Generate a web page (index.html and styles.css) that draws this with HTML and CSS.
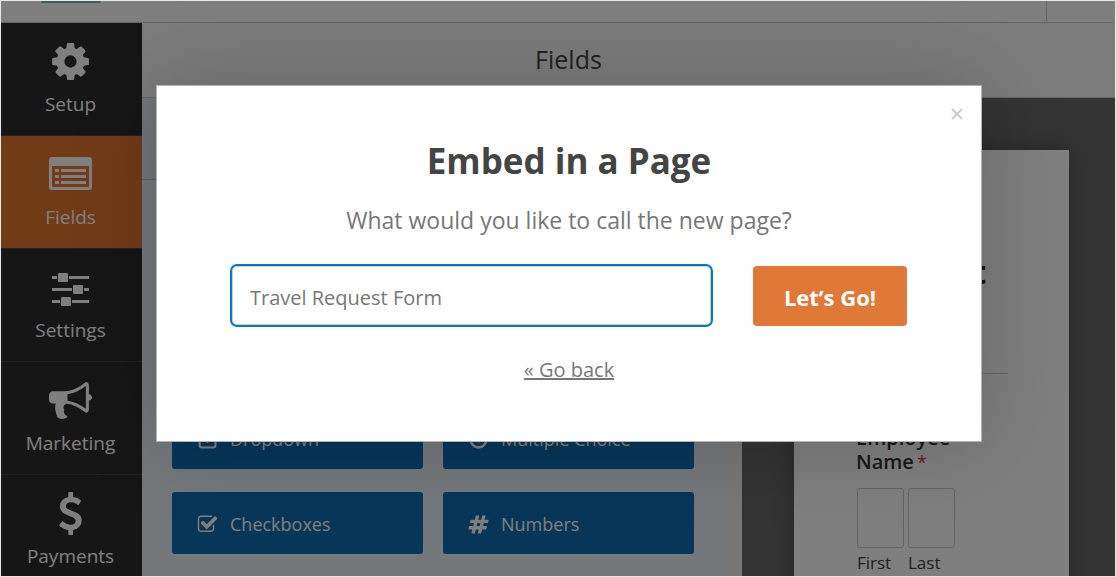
FILE: index.html
```html
<!DOCTYPE html>
<html lang="en">
<head>
<meta charset="utf-8">
<meta name="viewport" content="width=device-width, initial-scale=1">
<title>Form Builder</title>
<link rel="stylesheet" href="styles.css">
</head>
<body>
<div class="app">
  <header class="topbar">
    <span class="logo"></span>
    <span class="divider"></span>
  </header>
  <div class="workspace">
    <nav class="sidebar">
      <button class="nav-item" type="button">
        <svg class="nav-icon" viewBox="0 0 1792 1792"><path d="M1152 896q0-106-75-181t-181-75-181 75-75 181 75 181 181 75 181-75 75-181zm512-109v222q0 12-8 23t-20 13l-185 28q-19 54-39 91 35 50 107 138 10 12 10 25t-9 23q-27 37-99 108t-94 71q-12 0-26-9l-138-108q-44 23-91 38-16 136-29 186-7 28-36 28h-222q-14 0-24.5-8.5t-11.5-21.5l-28-184q-49-16-90-37l-141 107q-10 9-25 9-14 0-25-11-126-114-165-168-7-10-7-23 0-12 8-23 15-21 51-66.5t54-70.5q-27-50-41-99l-183-27q-13-2-21-12.5t-8-23.5v-222q0-12 8-23t19-13l186-28q14-46 39-92-40-57-107-138-10-12-10-24 0-10 9-23 26-36 98.5-107.5t94.5-71.5q13 0 26 10l138 107q44-23 91-38 16-136 29-186 7-28 36-28h222q14 0 24.5 8.5t11.5 21.5l28 184q49 16 90 37l142-107q9-9 24-9 13 0 25 10 129 119 165 170 7 8 7 22 0 12-8 23-15 21-51 66.5t-54 70.5q26 50 41 98l183 28q13 2 21 12.5t8 23.5z"/></svg>
        <span>Setup</span>
      </button>
      <button class="nav-item active" type="button">
        <svg class="nav-icon" viewBox="0 0 43 43"><path fill-rule="evenodd" d="M3 4h37q3 0 3 3v27q0 3-3 3H3q-3 0-3-3V7q0-3 3-3zM3 13v20q0 1 1 1h35q1 0 1-1V13z"/><path d="M6 16h4v3H6zM12 16h25v3H12zM6 22h4v3H6zM12 22h25v3H12zM6 28h4v3H6zM12 28h25v3H12z"/></svg>
        <span>Fields</span>
      </button>
      <button class="nav-item" type="button">
        <svg class="nav-icon" viewBox="0 0 43 43"><path d="M3 10h37v3H3zM3 22h37v3H3zM3 34h37v3H3z"/><rect class="knob-gap" x="8" y="7" width="12" height="9"/><rect class="knob-gap" x="23" y="19" width="12" height="9"/><rect class="knob-gap" x="11" y="31" width="12" height="9"/><rect x="9" y="7" width="10" height="9" rx="1"/><rect x="24" y="19" width="10" height="9" rx="1"/><rect x="12" y="31" width="10" height="9" rx="1"/></svg>
        <span>Settings</span>
      </button>
      <button class="nav-item" type="button">
        <svg class="nav-icon" viewBox="0 0 1792 1792"><path d="M1664 640q53 0 90.5 37.5t37.5 90.5-37.5 90.5-90.5 37.5v384q0 52-38 90t-90 38q-417-347-812-380-58 19-91 66t-31 100.5 40 92.5q-20 33-23 65.5t6 58 33.5 55 48 50 61.5 50.5q-29 58-111.5 83t-168.5 11.5-132-55.5q-7-23-29.5-87.5t-32-94.5-23-89-15-101 3.5-98.5 22-110.5h-122q-66 0-113-47t-47-113v-192q0-66 47-113t113-47h480q435 0 896-384 52 0 90 38t38 90v384zm-128 604v-954q-394 302-768 343v270q377 42 768 341z"/></svg>
        <span>Marketing</span>
      </button>
      <button class="nav-item" type="button">
        <svg class="nav-icon" viewBox="0 0 1792 1792"><path d="M1362 1185q0 153-99.5 263.5t-258.5 136.5v175q0 14-9 23t-23 9h-135q-13 0-22.5-9.5t-9.500-22.5v-175q-66-9-127.5-31t-101.5-44.5-74-48-46.5-37.5-17.5-18q-17-21-2-41l103-135q7-10 23-12 15-2 24 9l2 2q113 99 243 125 37 8 74 8 81 0 142.5-43t61.5-122q0-28-15-53t-33.5-42-58.5-37.5-66-32-80-32.5q-39-16-61.5-25t-61.5-26.5-62.5-31-56.5-35.5-53.5-42.5-43.5-49-35.5-58-21-66.5-8.5-78q0-138 98-242t255-134v-180q0-13 9.5-22.5t22.5-9.5h135q14 0 23 9t9 23v176q57 6 110.5 23t87 33.5 63.5 37.5 39 29 15 14q17 18 5 38l-81 146q-8 15-23 16-14 3-27-7-3-3-14.5-12t-39-26.5-58.5-32-74.5-26-85.5-11.5q-95 0-155 43t-60 111q0 26 8.5 48t29.5 41.5 39.5 33 56 31 60.5 27 70 27.5q53 20 81 31.5t76 35 75.5 42.5 62 50 53 63.5 31.5 76.5 13 94z"/></svg>
        <span>Payments</span>
      </button>
    </nav>
    <main class="main">
      <h1 class="panel-title">Fields</h1>
      <div class="columns">
        <section class="fields-panel">
          <div class="tabs"></div>
          <div class="field-grid">
            <button class="field-btn" type="button">
              <svg class="field-icon" viewBox="0 0 1792 1792"><path d="M1273 659q18 35-5 66l-320 448q-19 27-52 27t-52-27l-320-448q-23-31-5-66 17-35 57-35h640q40 0 57 35z"/><rect x="224" y="224" width="1350" height="1350" rx="190" fill="none" stroke="currentColor" stroke-width="180"/></svg>
              <span>Dropdown</span>
            </button>
            <button class="field-btn" type="button">
              <svg class="field-icon" viewBox="0 0 1792 1792"><circle cx="896" cy="896" r="256"/><circle cx="896" cy="896" r="670" fill="none" stroke="currentColor" stroke-width="220"/></svg>
              <span>Multiple Choice</span>
            </button>
            <button class="field-btn" type="button">
              <svg class="field-icon" viewBox="0 0 1792 1792"><path d="M1472 930v318q0 119-84.500 203.500t-203.500 84.500h-832q-119 0-203.500-84.500t-84.500-203.500v-832q0-119 84.500-203.500t203.500-84.500h832q63 0 117 25 15 7 18 23 3 17-9 29l-49 49q-10 10-23 10-3 0-9-2-23-6-45-6h-832q-66 0-113 47t-47 113v832q0 66 47 113t113 47h832q66 0 113-47t47-113v-254q0-13 9-22l64-64q10-10 23-10 6 0 12 3 20 8 20 29zm231-489l-814 814q-24 24-57 24t-57-24l-430-430q-24-24-24-57t24-57l110-110q24-24 57-24t57 24l263 263 647-647q24-24 57-24t57 24l110 110q24 24 24 57t-24 57z"/></svg>
              <span>Checkboxes</span>
            </button>
            <button class="field-btn" type="button">
              <svg class="field-icon" viewBox="0 0 1792 1792"><path d="M991 1024l64-256h-254l-64 256h254zm768-504l-56 224q-7 24-31 24h-327l-64 256h311q15 0 25 12 10 14 6 28l-56 224q-5 24-31 24h-327l-81 328q-7 24-31 24h-224q-16 0-26-12-9-12-6-28l78-312h-254l-81 328q-7 24-31 24h-225q-15 0-25-12-9-12-6-28l78-312h-311q-15 0-25-12-9-12-6-28l56-224q7-24 31-24h327l64-256h-311q-15 0-25-12-10-14-6-28l56-224q5-24 31-24h327l81-328q7-24 32-24h224q15 0 25 12 9 12 6 28l-78 312h254l81-328q7-24 32-24h224q15 0 25 12 9 12 6 28l-78 312h311q15 0 25 12 9 12 6 28z"/></svg>
              <span>Numbers</span>
            </button>
          </div>
        </section>
        <section class="preview">
          <div class="sheet">
            <h2 class="form-title">Travel Request Form</h2>
            <fieldset class="name-field">
              <legend>Employee Name<span class="required">*</span></legend>
              <div class="name-parts">
                <div class="name-part"><input id="first" type="text"><label for="first">First</label></div>
                <div class="name-part"><input id="last" type="text"><label for="last">Last</label></div>
              </div>
            </fieldset>
          </div>
        </section>
      </div>
    </main>
  </div>
</div>
<div class="overlay">
  <div class="modal" role="dialog" aria-modal="true" aria-labelledby="modal-title">
    <button class="close" type="button" aria-label="Close"><svg viewBox="0 0 12 12"><path d="M1 1l10 10M11 1L1 11"/></svg></button>
    <h2 class="modal-title" id="modal-title">Embed in a Page</h2>
    <label class="modal-text" for="page-name">What would you like to call the new page?</label>
    <form class="modal-form">
      <input class="page-name" id="page-name" type="text" placeholder="Travel Request Form">
      <button class="submit" type="button">Let’s Go!</button>
    </form>
    <a class="back" href="#">« Go back</a>
  </div>
</div>
</body>
</html>
```
FILE: styles.css
```css
* {
  box-sizing: border-box;
}

body {
  margin: 0;
  height: 100vh;
  overflow: hidden;
  background: #e8eaea;
  font-family: "Open Sans", "Noto Sans", sans-serif;
}

button,
input {
  font-family: inherit;
}

.app {
  height: 100vh;
  border: 1px solid #e8eaea;
  display: flex;
  flex-direction: column;
  overflow: hidden;
}

.topbar {
  flex: none;
  height: 22px;
  display: flex;
  justify-content: space-between;
  background: #fff;
  border-bottom: 1px solid #ccc;
}

.logo {
  width: 60px;
  height: 2px;
  margin-left: 40px;
  background: #7fb3bd;
  border-radius: 0 0 2px 2px;
}

.divider {
  width: 69px;
  height: 20px;
  border-left: 1px solid #ccc;
}

.workspace {
  flex: 1;
  min-height: 0;
  display: flex;
}

.sidebar {
  flex: none;
  width: 141px;
  display: flex;
  flex-direction: column;
  background: #2d2d2d;
}

.nav-item {
  flex: none;
  height: 113px;
  padding: 17px 2px 0 0;
  display: flex;
  flex-direction: column;
  align-items: center;
  gap: 8px;
  border: 0;
  border-bottom: 1px solid #424242;
  background: #2d2d2d;
  color: #fff;
  font-size: 19px;
  line-height: 26px;
}

.nav-item.active {
  background: #e27730;
}

.nav-icon {
  width: 43px;
  height: 43px;
  fill: currentColor;
}

.knob-gap {
  fill: #2d2d2d;
}

.main {
  flex: 1;
  min-width: 0;
  display: flex;
  flex-direction: column;
}

.panel-title {
  flex: none;
  margin: 0;
  height: 75px;
  padding-right: 120px;
  background: #f8f8f8;
  border-bottom: 1px solid #ccc;
  color: #444;
  font-size: 25px;
  font-weight: 400;
  line-height: 72px;
  text-align: center;
}

.columns {
  flex: 1;
  min-height: 0;
  display: grid;
  grid-template-columns: 600fr 373fr;
}

.fields-panel {
  background: #ebf0f7;
  border-right: 16px solid #f0eeec;
  overflow: hidden;
}

.tabs {
  height: 82px;
  background: #e4ebf5;
  border-bottom: 1px solid #b4bac2;
}

.field-grid {
  padding: 227px 32px 23px 30px;
  display: grid;
  grid-template-columns: 1fr 1fr;
  gap: 23px 20px;
}

.field-btn {
  height: 62px;
  padding: 2px 25px 0;
  display: flex;
  align-items: center;
  gap: 12px;
  border: 0;
  border-radius: 3px;
  background: #0e6cb2;
  color: #fff;
  font-size: 18px;
  line-height: 28px;
}

.field-icon {
  width: 21px;
  height: 21px;
  fill: currentColor;
}

.preview {
  padding: 52px 46px 0 52px;
  background: #686868;
  overflow: hidden;
}

.sheet {
  height: 600px;
  padding: 60px 61px 0 62px;
  background: #fff;
  box-shadow: 0 0 20px rgba(0, 0, 0, 0.3);
}

.form-title {
  margin: 0 0 52px;
  padding-bottom: 40px;
  border-bottom: 1px solid #ccc;
  color: #222;
  font-size: 32px;
  font-weight: 700;
  line-height: 41px;
}

.name-field {
  margin: 0;
  padding: 0;
  border: 0;
  min-width: 0;
}

.name-field legend {
  padding: 0;
  width: 100px;
  color: #333;
  font-size: 20px;
  font-weight: 600;
  line-height: 24px;
}

.required {
  margin-left: 3px;
  color: #d63638;
  font-size: 18px;
  font-weight: 400;
}

.name-parts {
  display: flex;
  gap: 4px;
  padding: 14px 0 0 1px;
}

.name-part {
  display: flex;
  flex-direction: column;
  width: 47px;
}

.name-part input {
  width: 100%;
  height: 60px;
  border: 1px solid #ccc;
  border-radius: 3px;
  background: #fff;
}

.name-part label {
  padding-top: 3px;
  color: #444;
  font-size: 17px;
  line-height: 24px;
}

.overlay {
  position: absolute;
  inset: 1px;
  padding: 84px 133px 0 155px;
  background: rgba(0, 0, 0, 0.5);
  overflow: hidden;
}

.modal {
  position: relative;
  padding: 51px 73px 56px;
  display: flex;
  flex-direction: column;
  align-items: center;
  border: 1px solid #b4b4b4;
  background: #fff;
  background-clip: padding-box;
  box-shadow: 0 0 80px rgba(0, 0, 0, 0.2);
  color: #777;
}

.close {
  position: absolute;
  top: 16px;
  right: 12px;
  width: 24px;
  height: 24px;
  padding: 6px;
  border: 0;
  background: none;
}

.close svg {
  display: block;
  width: 12px;
  height: 12px;
  stroke: #ccc;
  stroke-width: 2;
}

.modal-title {
  margin: 0;
  color: #444;
  font-size: 35px;
  font-weight: 700;
  line-height: 48px;
}

.modal-text {
  margin-top: 18px;
  font-size: 23px;
  line-height: 34px;
}

.modal-form {
  width: 100%;
  margin-top: 27px;
  padding-right: 1px;
  display: flex;
  align-items: center;
  gap: 40px;
}

.page-name {
  flex: 1;
  min-width: 0;
  height: 63px;
  padding: 4px 18px 0;
  border: 2px solid #007cba;
  border-radius: 7px;
  outline: 0;
  background: #fff;
  box-shadow: inset 0 0 0 1px #ccc;
  color: #444;
  font-size: 20px;
}

.page-name::placeholder {
  color: #777;
  opacity: 1;
}

.submit {
  width: 154px;
  height: 60px;
  padding: 2px 0 0;
  border: 0;
  border-radius: 4px;
  background: #e07838;
  color: #fff;
  font-size: 22px;
  font-weight: 700;
}

.back {
  margin-top: 28px;
  color: #777;
  font-size: 20px;
  line-height: 30px;
}
```
